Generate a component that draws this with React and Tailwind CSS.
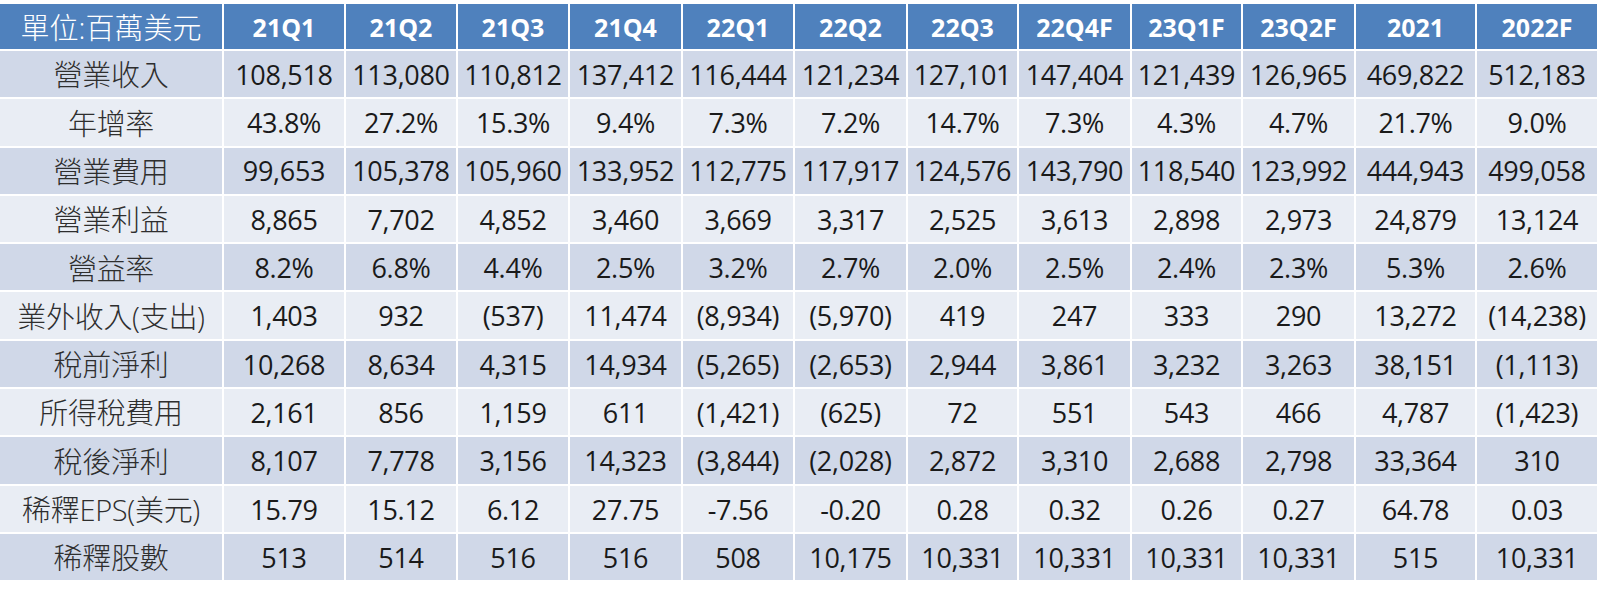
import React from "react";

const header = ["21Q1","21Q2","21Q3","21Q4","22Q1","22Q2","22Q3","22Q4F","23Q1F","23Q2F","2021","2022F"];

const rows = [
  ["營業收入","108,518","113,080","110,812","137,412","116,444","121,234","127,101","147,404","121,439","126,965","469,822","512,183"],
  ["年增率","43.8%","27.2%","15.3%","9.4%","7.3%","7.2%","14.7%","7.3%","4.3%","4.7%","21.7%","9.0%"],
  ["營業費用","99,653","105,378","105,960","133,952","112,775","117,917","124,576","143,790","118,540","123,992","444,943","499,058"],
  ["營業利益","8,865","7,702","4,852","3,460","3,669","3,317","2,525","3,613","2,898","2,973","24,879","13,124"],
  ["營益率","8.2%","6.8%","4.4%","2.5%","3.2%","2.7%","2.0%","2.5%","2.4%","2.3%","5.3%","2.6%"],
  ["業外收入(支出)","1,403","932","(537)","11,474","(8,934)","(5,970)","419","247","333","290","13,272","(14,238)"],
  ["稅前淨利","10,268","8,634","4,315","14,934","(5,265)","(2,653)","2,944","3,861","3,232","3,263","38,151","(1,113)"],
  ["所得稅費用","2,161","856","1,159","611","(1,421)","(625)","72","551","543","466","4,787","(1,423)"],
  ["稅後淨利","8,107","7,778","3,156","14,323","(3,844)","(2,028)","2,872","3,310","2,688","2,798","33,364","310"],
  ["稀釋EPS(美元)","15.79","15.12","6.12","27.75","-7.56","-0.20","0.28","0.32","0.26","0.27","64.78","0.03"],
  ["稀釋股數","513","514","516","516","508","10,175","10,331","10,331","10,331","10,331","515","10,331"],
];

const font = { fontFamily: '"Open Sans", "Noto Sans CJK TC", sans-serif' };

export default function App() {
  return (
    <div className="w-[1600px] h-[594px] bg-white pt-[4px]" style={font}>
      <div className="grid grid-cols-[222px_120px_110px_110px_111px_110px_111px_109px_111px_109px_111px_119px_120px] grid-rows-[45px_repeat(11,46.3px)] gap-[2px] w-[1597px]">
        <div className="bg-[#4f81bd] text-white text-[29px] font-light flex items-center justify-center pt-[3px] whitespace-nowrap">單位:百萬美元</div>
        {header.map((h) => (
          <div key={h} className="bg-[#4f81bd] text-white text-[25px] font-bold flex items-center justify-center pt-[3px] whitespace-nowrap">{h}</div>
        ))}
        {rows.map((r, i) => (
          <React.Fragment key={i}>
            {r.map((c, j) => (
              <div
                key={j}
                className={
                  (i % 2 === 0 ? "bg-[#d0d8e8] " : "bg-[#e9edf4] ") +
                  (j === 0 ? "text-[29px] font-light text-[#2e2e2e] " : "text-[27px] text-[#1a1a1a] ") +
                  "flex items-center justify-center pt-[2px] whitespace-nowrap tracking-[-0.3px]"
                }
              >
                {c}
              </div>
            ))}
          </React.Fragment>
        ))}
      </div>
    </div>
  );
}
